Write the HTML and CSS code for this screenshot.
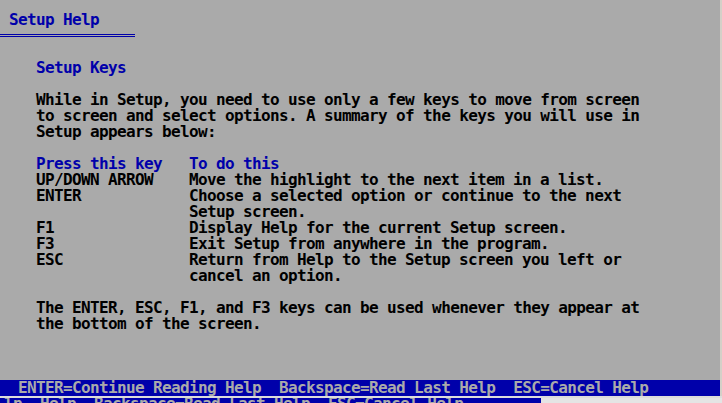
FILE: index.html
```html
<!DOCTYPE html>
<html lang="en">
<head>
<meta charset="utf-8">
<title>Setup Help</title>
<link rel="stylesheet" href="styles.css">
</head>
<body>
<div class="frame">
  <div class="screen">
    <div class="title">Setup Help</div>
    <div class="rule"></div>
    <main class="content">
      <h2 class="section">Setup Keys</h2>
      <p class="para">While in Setup, you need to use only a few keys to move from screen<br>to screen and select options. A summary of the keys you will use in<br>Setup appears below:</p>
      <div class="keys">
        <div class="kh">Press this key</div><div class="kh">To do this</div>
        <div>UP/DOWN ARROW</div><div>Move the highlight to the next item in a list.</div>
        <div>ENTER</div><div>Choose a selected option or continue to the next<br>Setup screen.</div>
        <div>F1</div><div>Display Help for the current Setup screen.</div>
        <div>F3</div><div>Exit Setup from anywhere in the program.</div>
        <div>ESC</div><div>Return from Help to the Setup screen you left or<br>cancel an option.</div>
      </div>
      <p class="para">The ENTER, ESC, F1, and F3 keys can be used whenever they appear at<br>the bottom of the screen.</p>
    </main>
    <div class="bar">ENTER=Continue Reading Help  Backspace=Read Last Help  ESC=Cancel Help</div>
  </div>
  <div class="edge"></div>
</div>
<div class="under">
  <div class="ghost"><span class="ghost-text">lp  Help  Backspace=Read Last Help  ESC=Cancel Help</span></div>
  <div class="ghost-rest"></div>
</div>
</body>
</html>
```
FILE: styles.css
```css
html, body {
  margin: 0;
  padding: 0;
}
body {
  background: #aaaaaa;
  width: 722px;
  height: 403px;
  overflow: hidden;
  font-family: "DejaVu Sans Mono", "Liberation Mono", monospace;
  font-weight: bold;
  font-size: 16px;
  letter-spacing: -0.63px;
  line-height: 16px;
  color: #000000;
}
.frame {
  display: flex;
  width: 722px;
  height: 396px;
}
.screen {
  width: 720px;
  height: 396px;
  background: #aaaaaa;
  display: flex;
  flex-direction: column;
  padding-top: 12px;
  box-sizing: border-box;
}
.edge {
  width: 2px;
  height: 396px;
  background: #d4d0c8;
}
.title {
  height: 16px;
  padding-left: 9px;
  color: #0000aa;
  white-space: pre;
}
.rule {
  width: 135px;
  height: 1px;
  margin: 6px 0 7px;
  border-top: 1px solid #0000aa;
  border-bottom: 1px solid #0000aa;
}
.content {
  padding-left: 36px;
  display: flex;
  flex-direction: column;
}
.section {
  margin: 16px 0 0;
  font-size: inherit;
  font-weight: inherit;
  line-height: 16px;
  color: #0000aa;
}
.para {
  margin: 16px 0 0;
  white-space: nowrap;
}
.keys {
  margin-top: 16px;
  display: grid;
  grid-template-columns: 153px auto;
  white-space: nowrap;
}
.kh {
  color: #0000aa;
}
.bar {
  margin-top: auto;
  height: 16px;
  background: #0000aa;
  color: #aaaaaa;
  padding-left: 18px;
  white-space: pre;
}
.under {
  display: flex;
  flex-direction: column;
  height: 7px;
  overflow: hidden;
  position: relative;
}
.under::before {
  content: "";
  display: block;
  height: 2px;
  background: #dcdcdc;
  width: 722px;
}
.ghost {
  width: 541px;
  height: 5px;
  overflow: hidden;
  background: #0000aa;
  color: #aaaaaa;
  white-space: pre;
}
.ghost-text {
  display: block;
  margin-top: -2px;
  padding-left: 4px;
}
.under .ghost-rest {
  display: none;
}
.under {
  background: #e4e4e4;
}
```
